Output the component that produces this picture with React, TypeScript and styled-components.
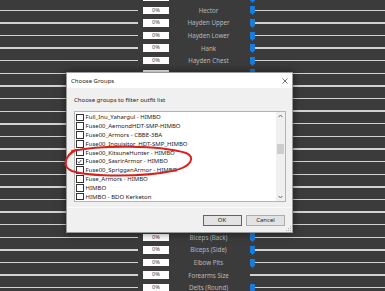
import React from "react";
import styled, { createGlobalStyle } from "styled-components";

const GlobalStyle = createGlobalStyle`
  html, body {
    margin: 0;
    padding: 0;
    background: #3b3b3b;
  }
  body {
    font-family: "Noto Sans", "Open Sans", sans-serif;
  }
`;

const Screen = styled.div`
  position: relative;
  width: 385px;
  height: 291px;
  overflow: hidden;
  background: #3b3b3b;
`;

// slider rows behind the dialog
const SliderList = styled.div`
  display: flex;
  flex-direction: column;
  margin-top: -8.6px;
`;

const SliderRow = styled.div`
  display: grid;
  grid-template-columns: 143px 26px 81px 1fr;
  align-items: center;
  height: 12.62px;
`;

const Track = styled.div`
  height: 1.4px;
  background: #d2d2d2;
`;

const LeftTrack = styled(Track)`
  width: 138px;
`;

const ValueBox = styled.div`
  height: 7.4px;
  background: #fdfdfd;
  color: #444;
  font-size: 5.6px;
  line-height: 7.4px;
  text-align: center;
`;

const Label = styled.div`
  color: #b9b9b9;
  font-size: 6.2px;
  text-align: center;
  padding-right: 2px;
  white-space: nowrap;
`;

const RightSide = styled.div`
  display: flex;
  align-items: center;
`;

const Thumb = styled.svg`
  flex: 0 0 auto;
  margin-top: 1px;
`;

const RightTrack = styled(Track)`
  flex: 1;
`;

// dialog
const Dialog = styled.div`
  position: absolute;
  left: 66px;
  top: 72px;
  width: 227px;
  height: 161px;
  box-sizing: border-box;
  border: 1px solid #9a9a9a;
  background: #f0f0f0;
  box-shadow: 0 0 8px rgba(0, 0, 0, 0.55);
  display: flex;
  flex-direction: column;
`;

const TitleBar = styled.div`
  display: flex;
  align-items: center;
  justify-content: space-between;
  height: 15px;
  background: #ffffff;
  padding: 0 4px;
  color: #222;
  font-size: 6px;
`;

const CloseIcon = styled.svg`
  display: block;
`;

const Body = styled.div`
  flex: 1;
  display: flex;
  flex-direction: column;
  padding: 7.5px 6px 0 7px;
`;

const Prompt = styled.div`
  font-size: 6px;
  color: #1e1e1e;
  height: 8px;
  line-height: 8px;
  margin-bottom: 7.5px;
`;

const ListBox = styled.div`
  display: flex;
  height: 91px;
  border: 1px solid #b4b4b4;
  background: #fff;
  box-sizing: border-box;
`;

const Items = styled.div`
  flex: 1;
  display: flex;
  flex-direction: column;
  padding: 1px 0 0 1px;
`;

const Item = styled.div`
  display: flex;
  align-items: center;
  gap: 2px;
  height: 9.03px;
  font-size: 6px;
  color: #1a1a1a;
  white-space: nowrap;
`;

const Check = styled.div`
  width: 5.6px;
  height: 5.6px;
  border: 0.8px solid #333;
  background: #fff;
  display: flex;
  align-items: center;
  justify-content: center;
`;

const ScrollBar = styled.div`
  width: 9px;
  display: flex;
  flex-direction: column;
  align-items: center;
  background: #f0f0f0;
  padding: 2px 0;
  box-sizing: border-box;
`;

const ScrollThumb = styled.div`
  width: 7px;
  height: 10px;
  background: #cdcdcd;
  margin-top: 26px;
`;

const ScrollSpacer = styled.div`
  flex: 1;
`;

const Footer = styled.div`
  display: flex;
  justify-content: flex-end;
  gap: 4.5px;
  margin: 5px -6px 0 -7px;
  padding: 7px 7px 0 0;
  border-top: 1px solid #fafafa;
  height: 22px;
  box-sizing: border-box;
`;

const Button = styled.div<{ $primary?: boolean }>`
  width: 39px;
  height: 11px;
  box-sizing: border-box;
  border: 1px solid ${(p) => (p.$primary ? "#0f78d4" : "#adadad")};
  background: #e3e3e3;
  font-size: 6px;
  line-height: 9px;
  color: #222;
  text-align: center;
`;

const Grip = styled.svg`
  position: absolute;
  right: 1px;
  bottom: 1px;
`;

const Circle = styled.svg`
  position: absolute;
  left: 60px;
  top: 143px;
  pointer-events: none;
`;

type Row = { label: string; value?: string; thumb?: boolean };

const rows: Row[] = [
  { label: "", value: "" },
  { label: "Hector" },
  { label: "Hayden Upper" },
  { label: "Hayden Lower" },
  { label: "Hank" },
  { label: "Hayden Chest" },
  // rows hidden behind the dialog
  ...Array.from({ length: 13 }, () => ({ label: "", value: "" })),
  { label: "Biceps (Back)" },
  { label: "Biceps (Side)" },
  { label: "Elbow Pits" },
  { label: "Forearms Size", thumb: false },
  { label: "Delts (Round)" },
];

const groups = [
  "Full_Inu_Yahargul - HIMBO",
  "Fuse00_AemondHDT-SMP-HIMBO",
  "Fuse00_Armors - CBBE-3BA",
  "Fuse00_Inquisitor_HDT-SMP_HIMBO",
  "Fuse00_KitsuneHunter - HIMBO",
  "Fuse00_SasrirArmor - HIMBO",
  "Fuse00_SprigganArmor - HIMBO",
  "Fuse_Armors - HIMBO",
  "HIMBO",
  "HIMBO - BDO Kerketon",
];

const Arrow = ({ up }: { up?: boolean }) => (
  <svg width="5" height="4" viewBox="0 0 5 4">
    <path
      d={up ? "M0.5 3.2 L2.5 1 L4.5 3.2" : "M0.5 0.8 L2.5 3 L4.5 0.8"}
      fill="none"
      stroke="#606060"
      strokeWidth="0.9"
    />
  </svg>
);

export default function App() {
  return (
    <Screen>
      <GlobalStyle />
      <SliderList>
        {rows.map((r, i) => (
          <SliderRow key={i}>
            <LeftTrack />
            <ValueBox>{r.value ?? "0%"}</ValueBox>
            <Label>{r.label}</Label>
            <RightSide>
              {r.thumb !== false && (
                <Thumb width="5" height="9" viewBox="0 0 5 9">
                  <path d="M0 0 H5 V6.2 L2.5 9 L0 6.2 Z" fill="#1c7bd8" />
                </Thumb>
              )}
              <RightTrack />
            </RightSide>
          </SliderRow>
        ))}
      </SliderList>

      <Dialog>
        <TitleBar>
          <span>Choose Groups</span>
          <CloseIcon width="6" height="6" viewBox="0 0 6 6">
            <path d="M0.5 0.5 L5.5 5.5 M5.5 0.5 L0.5 5.5" stroke="#333" strokeWidth="0.7" />
          </CloseIcon>
        </TitleBar>
        <Body>
          <Prompt>Choose groups to filter outfit list</Prompt>
          <ListBox>
            <Items>
              {groups.map((g) => {
                const checked = g === "Fuse00_SasrirArmor - HIMBO";
                return (
                  <Item key={g}>
                    <Check>
                      {checked && (
                        <svg width="5" height="5" viewBox="0 0 5 5">
                          <path d="M0.8 2.6 L2 3.8 L4.3 1" fill="none" stroke="#222" strokeWidth="0.8" />
                        </svg>
                      )}
                    </Check>
                    <span>{g}</span>
                  </Item>
                );
              })}
            </Items>
            <ScrollBar>
              <Arrow up />
              <ScrollThumb />
              <ScrollSpacer />
              <Arrow />
            </ScrollBar>
          </ListBox>
          <Footer>
            <Button $primary>OK</Button>
            <Button>Cancel</Button>
          </Footer>
        </Body>
        <Grip width="5" height="5" viewBox="0 0 5 5">
          <rect x="4" y="0" width="1" height="1" fill="#b0b0b0" />
          <rect x="2" y="2" width="1" height="1" fill="#b0b0b0" />
          <rect x="4" y="2" width="1" height="1" fill="#b0b0b0" />
          <rect x="0" y="4" width="1" height="1" fill="#b0b0b0" />
          <rect x="2" y="4" width="1" height="1" fill="#b0b0b0" />
          <rect x="4" y="4" width="1" height="1" fill="#b0b0b0" />
        </Grip>
      </Dialog>

      <Circle width="140" height="40" viewBox="0 0 140 40">
        <path
          d="M12 8 C40 2, 100 2, 126 10 C136 14, 132 24, 112 28 C84 34, 30 34, 12 28 C2 24, 4 13, 16 7"
          fill="none"
          stroke="#d8201c"
          strokeWidth="2"
          strokeLinecap="round"
        />
      </Circle>
    </Screen>
  );
}
